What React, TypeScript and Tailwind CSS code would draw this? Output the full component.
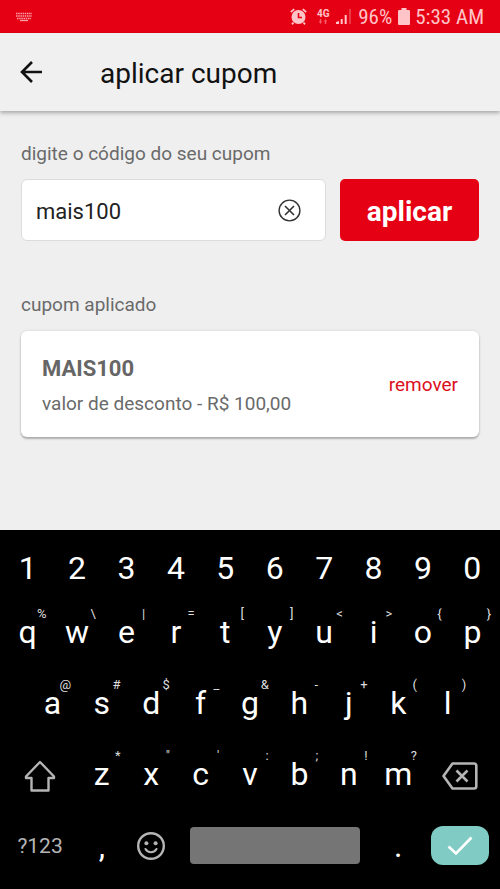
import React, { useState } from "react";

interface Key {
  label: string;
  hint?: string;
}

const DIGITS = ["1", "2", "3", "4", "5", "6", "7", "8", "9", "0"];

const TOP_ROW: Key[] = [
  { label: "q", hint: "%" },
  { label: "w", hint: "\\" },
  { label: "e", hint: "|" },
  { label: "r", hint: "=" },
  { label: "t", hint: "[" },
  { label: "y", hint: "]" },
  { label: "u", hint: "<" },
  { label: "i", hint: ">" },
  { label: "o", hint: "{" },
  { label: "p", hint: "}" },
];

const HOME_ROW: Key[] = [
  { label: "a", hint: "@" },
  { label: "s", hint: "#" },
  { label: "d", hint: "$" },
  { label: "f", hint: "_" },
  { label: "g", hint: "&" },
  { label: "h", hint: "-" },
  { label: "j", hint: "+" },
  { label: "k", hint: "(" },
  { label: "l", hint: ")" },
];

const BOTTOM_ROW: Key[] = [
  { label: "z", hint: "*" },
  { label: "x", hint: '"' },
  { label: "c", hint: "'" },
  { label: "v", hint: ":" },
  { label: "b", hint: ";" },
  { label: "n", hint: "!" },
  { label: "m", hint: "?" },
];

const StatusBar = () => (
  <div className="flex h-[33px] items-center justify-between bg-[#e60013] px-4 text-[#ffc4c8]">
    <svg width="16" height="10" viewBox="0 0 16 10" fill="none" stroke="#f9a0a8">
      <path d="M0 1.5h16M0 4h16M1 6.5h14" strokeWidth="1.5" strokeDasharray="1.5 .7" />
      <path d="M4 8.5h8" strokeWidth="1.3" />
    </svg>
    <div className="flex items-center">
      <svg width="17" height="17" viewBox="0 0 17 17" fill="none">
        <circle cx="8.5" cy="9" r="7" fill="currentColor" />
        <path
          d="M.8 4.2 4.2 1.2M16.2 4.2l-3.4-3M3.5 14.5 2 16.4M13.5 14.5l1.5 1.9"
          stroke="currentColor"
          strokeWidth="1.8"
        />
        <path d="M8.5 5v4.5H12" stroke="#e60013" strokeWidth="1.6" />
      </svg>
      <div className="ml-2 flex w-4 flex-col items-center">
        <span className="text-[10px] leading-[10px] font-bold">4G</span>
        <svg width="10" height="5" viewBox="0 0 10 5" fill="#f2606a">
          <path d="M2.5 5 .8 2.5h1V0h1.4v2.5h1zM7.5 0l1.7 2.5h-1V5H6.8V2.5h-1z" />
        </svg>
      </div>
      <svg className="ml-1" width="17" height="17" viewBox="0 0 17 17" fill="currentColor">
        <path d="M1 16v-2l3-1v3zM5.7 16v-5h2v5zM9.7 16V7h2v9z" />
        <path d="M14.5 16V1h1v15z" fill="#f47078" />
      </svg>
      <span className="ml-[6px] pt-px font-['Roboto_Condensed','Roboto',sans-serif] text-[21px] leading-6">
        96%
      </span>
      <svg className="ml-[6px]" width="12" height="17" viewBox="0 0 12 17" fill="currentColor">
        <path d="M3.5 0h5v2H11q1 0 1 1v13q0 1-1 1H1q-1 0-1-1V3q0-1 1-1h2.5z" />
      </svg>
      <span className="ml-[5px] pt-px font-['Roboto_Condensed','Roboto',sans-serif] text-[21px] leading-6">
        5:33 AM
      </span>
    </div>
  </div>
);

const LetterKey = ({ label, hint }: Key) => (
  <button
    type="button"
    className="relative flex flex-1 items-center justify-center text-[32px] leading-10"
  >
    {label}
    {hint && (
      <span className="absolute top-[10px] right-[6px] text-[13px] leading-4 text-[#dedede]">
        {hint}
      </span>
    )}
  </button>
);

const Keyboard = () => (
  <div className="bg-black px-[3px] pt-[9px] pb-[7px] text-white">
    <div className="flex h-[57px]">
      {DIGITS.map((digit) => (
        <LetterKey key={digit} label={digit} />
      ))}
    </div>
    <div className="flex h-[71px]">
      {TOP_ROW.map((key) => (
        <LetterKey key={key.label} {...key} />
      ))}
    </div>
    <div className="flex h-[71px] px-[5%]">
      {HOME_ROW.map((key) => (
        <LetterKey key={key.label} {...key} />
      ))}
    </div>
    <div className="flex h-[71px]">
      <button
        type="button"
        aria-label="shift"
        className="flex w-[15%] items-center justify-center pt-1 text-[#b5b5b5]"
      >
        <svg width="32" height="32" viewBox="0 0 32 32" fill="none" stroke="currentColor" strokeWidth="2.4" strokeLinejoin="round">
          <path d="M16 2 30 16.5V18h-5.500v12.500h-17V18H2v-1.500z" />
        </svg>
      </button>
      {BOTTOM_ROW.map((key) => (
        <LetterKey key={key.label} {...key} />
      ))}
      <button
        type="button"
        aria-label="apagar"
        className="flex w-[15%] items-center justify-center pt-1 text-[#b5b5b5]"
      >
        <svg width="36" height="28" viewBox="0 0 36 28" fill="none" stroke="currentColor" strokeWidth="2.6" strokeLinejoin="round">
          <path d="M10.500 1.500H32q2.300 0 2.300 2.300v20.400q0 2.300-2.300 2.300H10.500L1.500 14z" />
          <path d="m14.500 8.500 11 11M25.500 8.500l-11 11" />
        </svg>
      </button>
    </div>
    <div className="flex h-[73px] items-center">
      <button type="button" className="w-[15%] text-[21px] leading-6 text-[#b5b5b5]">
        ?123
      </button>
      <button type="button" className="w-[10%] text-[32px] leading-10">
        ,
      </button>
      <button
        type="button"
        aria-label="emoji"
        className="flex w-[10%] items-center justify-center text-[#b5b5b5]"
      >
        <svg width="30" height="30" viewBox="0 0 30 30" fill="none" stroke="currentColor">
          <circle cx="15" cy="15" r="12.8" strokeWidth="2.4" />
          <circle cx="10.4" cy="12.3" r="2" fill="currentColor" stroke="none" />
          <circle cx="19.6" cy="12.3" r="2" fill="currentColor" stroke="none" />
          <path d="M9.500 18q1.800 3.200 5.500 3.200t5.500-3.200" strokeWidth="2.1" strokeLinecap="round" />
        </svg>
      </button>
      <div className="flex-1 px-[14px]">
        <button
          type="button"
          aria-label="espaço"
          className="block h-[37px] w-full rounded-[4px] bg-[#757575]"
        />
      </div>
      <button type="button" className="w-[10%] text-[32px] leading-10">
        .
      </button>
      <div className="w-[15%] px-2">
        <button
          type="button"
          aria-label="confirmar"
          className="flex h-[39px] w-full items-center justify-center rounded-xl bg-[#80cbc4]"
        >
          <svg width="26" height="20" viewBox="0 0 26 20" fill="none" stroke="#fff" strokeWidth="2.6">
            <path d="m1.500 10.500 7.500 7L24.500 1.500" />
          </svg>
        </button>
      </div>
    </div>
  </div>
);

const App: React.FC = () => {
  const [code, setCode] = useState("mais100");

  return (
    <div className="flex min-h-screen flex-col bg-[#efefef] font-['Roboto',sans-serif]">
      <StatusBar />

      <header className="flex h-[78px] items-center bg-[#f0f0f0] px-5 shadow-[0_2px_4px_rgba(0,0,0,0.3)]">
        <button type="button" aria-label="voltar">
          <svg width="23" height="22" viewBox="0 0 23 22" fill="none" stroke="#111" strokeWidth="2.6">
            <path d="M22 11H2M12 1 2 11l10 10" />
          </svg>
        </button>
        <h1 className="ml-[57px] pt-1 text-[28px] leading-9 text-[#111]">aplicar cupom</h1>
      </header>

      <main className="flex-1 px-[21px] pt-[31px] pb-8 text-[#6a6a6a]">
        <label htmlFor="coupon" className="block text-[19px] leading-6">
          digite o código do seu cupom
        </label>
        <div className="mt-[13px] flex gap-[14px]">
          <div className="flex h-[62px] min-w-0 flex-1 items-center rounded-md border border-[#dcdcdc] bg-white pr-6 pl-[14px]">
            <input
              id="coupon"
              type="text"
              value={code}
              onChange={(e) => setCode(e.target.value)}
              className="min-w-0 flex-1 pt-1 text-[22px] leading-8 text-[#222] outline-none"
            />
            <button type="button" aria-label="limpar" onClick={() => setCode("")}>
              <svg width="23" height="23" viewBox="0 0 23 23" fill="none" stroke="#333" strokeWidth="1.4">
                <circle cx="11.5" cy="11.5" r="10.4" />
                <path d="m7 7 9 9M16 7l-9 9" strokeWidth="1.6" />
              </svg>
            </button>
          </div>
          <button
            type="button"
            className="h-[62px] w-[139px] rounded-[5px] bg-[#e60013] pt-1 text-[28px] leading-8 font-bold text-white"
          >
            aplicar
          </button>
        </div>

        <h2 className="mt-[52px] text-[19px] leading-6">cupom aplicado</h2>
        <section className="mt-[14px] flex h-[106px] items-center justify-between rounded-md bg-white px-[21px] shadow-[0_2px_2px_rgba(0,0,0,0.25),0_0_3px_rgba(0,0,0,0.12)]">
          <div className="pt-1">
            <p className="text-[22px] leading-8 font-bold text-[#666]">MAIS100</p>
            <p className="mt-[3px] text-[19px] leading-8">valor de desconto - R$ 100,00</p>
          </div>
          <button type="button" className="pt-px text-[19px] leading-6 text-[#dc1020]">
            remover
          </button>
        </section>
      </main>

      <Keyboard />
    </div>
  );
};

export default App;
